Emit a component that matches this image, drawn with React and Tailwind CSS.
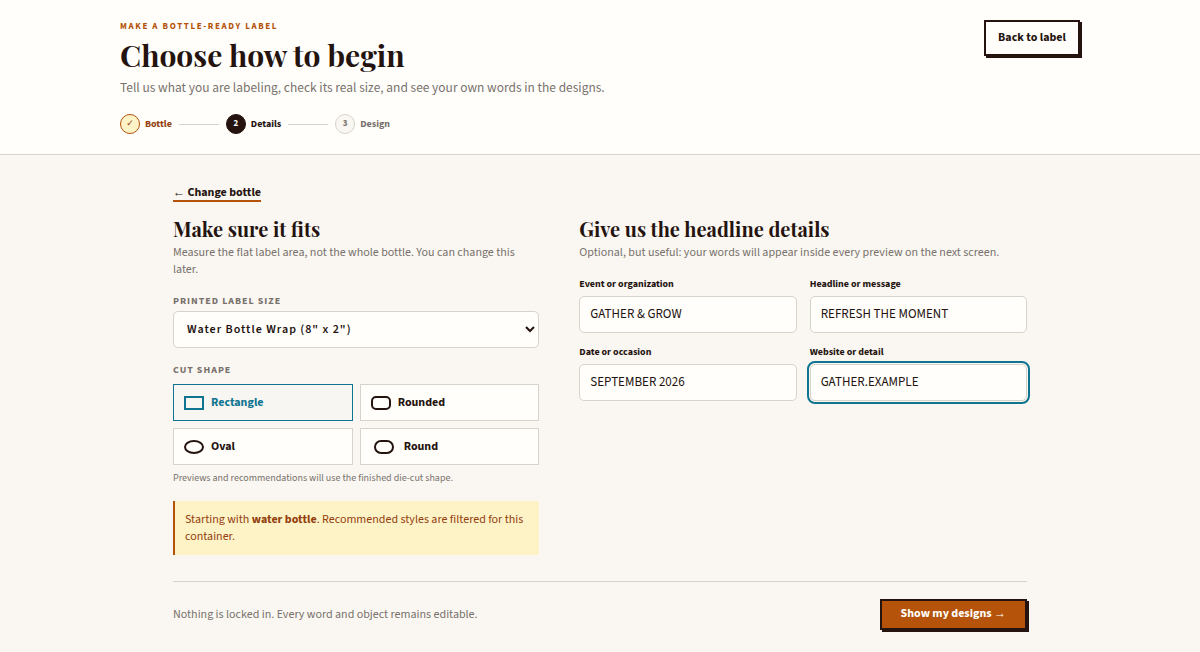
import { useState } from 'react';
import clsx from 'clsx';

const shapes = [
  { id: 'rectangle', label: 'Rectangle', icon: '' },
  { id: 'rounded', label: 'Rounded', icon: 'rounded-[5px]' },
  { id: 'oval', label: 'Oval', icon: 'rounded-[50%]' },
  { id: 'round', label: 'Round', icon: 'rounded-full mx-[3px]' },
];

const fields = [
  { id: 'event', label: 'Event or organization', value: 'GATHER & GROW' },
  { id: 'headline', label: 'Headline or message', value: 'REFRESH THE MOMENT' },
  { id: 'date', label: 'Date or occasion', value: 'SEPTEMBER 2026' },
  { id: 'website', label: 'Website or detail', value: 'GATHER.EXAMPLE', focused: true },
];

const Heading = ({ children }) => (
  <h2 className="font-['Playfair_Display','Liberation_Serif',serif] text-[20px] leading-7 font-bold">
    {children}
  </h2>
);

const Arrow = ({ children }) => (
  <span className="font-['Liberation_Sans',sans-serif] font-normal">{children}</span>
);

const Step = ({ mark, label, circle, text }) => (
  <li className={clsx('flex items-center gap-[5px] text-[10px] font-bold', text)}>
    <span className={clsx('flex size-5 items-center justify-center rounded-full border text-[9px]', circle)}>
      {mark}
    </span>
    {label}
  </li>
);

const Divider = () => <li aria-hidden="true" className="h-px w-10 bg-[#d6d3cb]" />;

const Header = () => (
  <header className="border-b border-[#d6d3cb] bg-[#fffefb]">
    <div className="mx-auto flex max-w-[960px] items-start justify-between py-5">
      <div>
        <p className="text-[9px] leading-[14px] font-bold tracking-[0.18em] text-[#b45309] uppercase">
          Make a bottle-ready label
        </p>
        <h1 className="mt-px font-['Playfair_Display','Liberation_Serif',serif] text-[30px] leading-10 font-bold">
          Choose how to begin
        </h1>
        <p className="mt-0.5 font-['Noto_Sans_CJK_SC',sans-serif] text-[12px] leading-5 text-[#78716c]">
          Tell us what you are labeling, check its real size, and see your own words in the designs.
        </p>
        <ol className="mt-[17px] flex items-center gap-[7px]">
          <Step
            mark="✓"
            label="Bottle"
            text="text-[#92400e]"
            circle="border-[#b45309] bg-[#fef3c7] font-['DejaVu_Sans',sans-serif]"
          />
          <Divider />
          <Step mark="2" label="Details" text="" circle="border-[#24130f] bg-[#24130f] text-white" />
          <Divider />
          <Step mark="3" label="Design" text="text-[#78716c]" circle="border-[#d6d3cb] bg-[#faf7f2]" />
        </ol>
      </div>
      <button
        type="button"
        className="h-9 border-2 border-[#24130f] bg-[#fffefb] px-3 text-[12px] font-bold shadow-[2px_2px_0_#24130f]"
      >
        Back to label
      </button>
    </div>
  </header>
);

const App = () => {
  const [shape, setShape] = useState('rectangle');

  return (
    <div className="min-h-screen bg-[#faf7f2] font-['Source_Sans_3','Noto_Sans_CJK_SC',sans-serif] text-[#24130f]">
      <Header />

      <main className="mx-auto max-w-[854px] pt-[30px] pb-5">
        <a href="#bottle" className="block w-fit border-b-2 border-[#b45309] text-[12px] leading-[14px] font-bold">
          <Arrow>←</Arrow> Change bottle
        </a>

        <div className="mt-[13px] grid grid-cols-[9fr_11fr] gap-10">
          {/* Size and shape */}
          <section>
            <Heading>Make sure it fits</Heading>
            <p className="mt-px text-[12px] leading-[17px] text-[#78716c]">
              Measure the flat label area, not the whole bottle. You can change this later.
            </p>

            <label htmlFor="size" className="mt-[17px] block text-[10px] leading-3 font-bold tracking-[1px] text-[#78716c] uppercase">
              Printed label size
            </label>
            <select
              id="size"
              className="mt-1 block h-[37px] w-full rounded-[5px] border border-[#d6d3cb] bg-[#fffefb] px-[9px] text-[12px] font-semibold tracking-[1px]"
            >
              <option>Water Bottle Wrap (8" x 2")</option>
            </select>

            <fieldset className="mt-4">
              <legend className="text-[10px] leading-3 font-bold tracking-[1px] text-[#78716c] uppercase">
                Cut shape
              </legend>
              <div className="mt-2 grid grid-cols-2 gap-[7px]">
                {shapes.map((s) => (
                  <button
                    key={s.id}
                    type="button"
                    aria-pressed={shape === s.id}
                    onClick={() => setShape(s.id)}
                    className={clsx(
                      'flex h-[37px] items-center gap-[7px] border px-2.5 text-[12px] font-bold',
                      shape === s.id
                        ? 'border-[#0e7490] bg-[#f8f6f2] text-[#0e7490]'
                        : 'border-[#d6d3cb] bg-[#fffefb]'
                    )}
                  >
                    <span className={clsx('h-3.5 w-5 border-2 border-current', s.icon)} />
                    {s.label}
                  </button>
                ))}
              </div>
            </fieldset>
            <p className="mt-1.5 text-[10px] leading-[14px] text-[#78716c]">
              Previews and recommendations will use the finished die-cut shape.
            </p>

            <p className="mt-4 border-l-2 border-[#b45309] bg-[#fef3c7] px-2.5 py-2.5 text-[12px] leading-[17px] text-[#92400e]">
              Starting with <strong>water bottle</strong>. Recommended styles are filtered for this container.
            </p>
          </section>

          {/* Label copy */}
          <section>
            <Heading>Give us the headline details</Heading>
            <p className="mt-px text-[12px] leading-[17px] text-[#78716c]">
              Optional, but useful: your words will appear inside every preview on the next screen.
            </p>
            <div className="mt-4 grid grid-cols-2 gap-x-[13px] gap-y-3">
              {fields.map((f) => (
                <div key={f.id}>
                  <label htmlFor={f.id} className="block text-[10px] leading-[14px] font-bold">
                    {f.label}
                  </label>
                  <input
                    id={f.id}
                    type="text"
                    defaultValue={f.value}
                    className={clsx(
                      'mt-[5px] block h-[37px] w-full rounded-[5px] border border-[#d6d3cb] bg-[#fffefb] px-2.5 pb-0.5 text-[13px]',
                      f.focused && 'outline-2 outline-offset-1 outline-[#0e7490]'
                    )}
                  />
                </div>
              ))}
            </div>
          </section>
        </div>

        <footer className="mt-[26px] flex items-center justify-between border-t border-[#d6d3cb] pt-[17px]">
          <p className="text-[12px] leading-[17px] text-[#78716c]">
            Nothing is locked in. Every word and object remains editable.
          </p>
          <button
            type="button"
            className="h-[31px] border-2 border-[#24130f] bg-[#b45309] px-[19px] pb-0.5 text-[12px] font-bold text-[#fffefb] shadow-[2px_2px_0_#24130f]"
          >
            Show my designs <Arrow>→</Arrow>
          </button>
        </footer>
      </main>
    </div>
  );
};

export default App;
